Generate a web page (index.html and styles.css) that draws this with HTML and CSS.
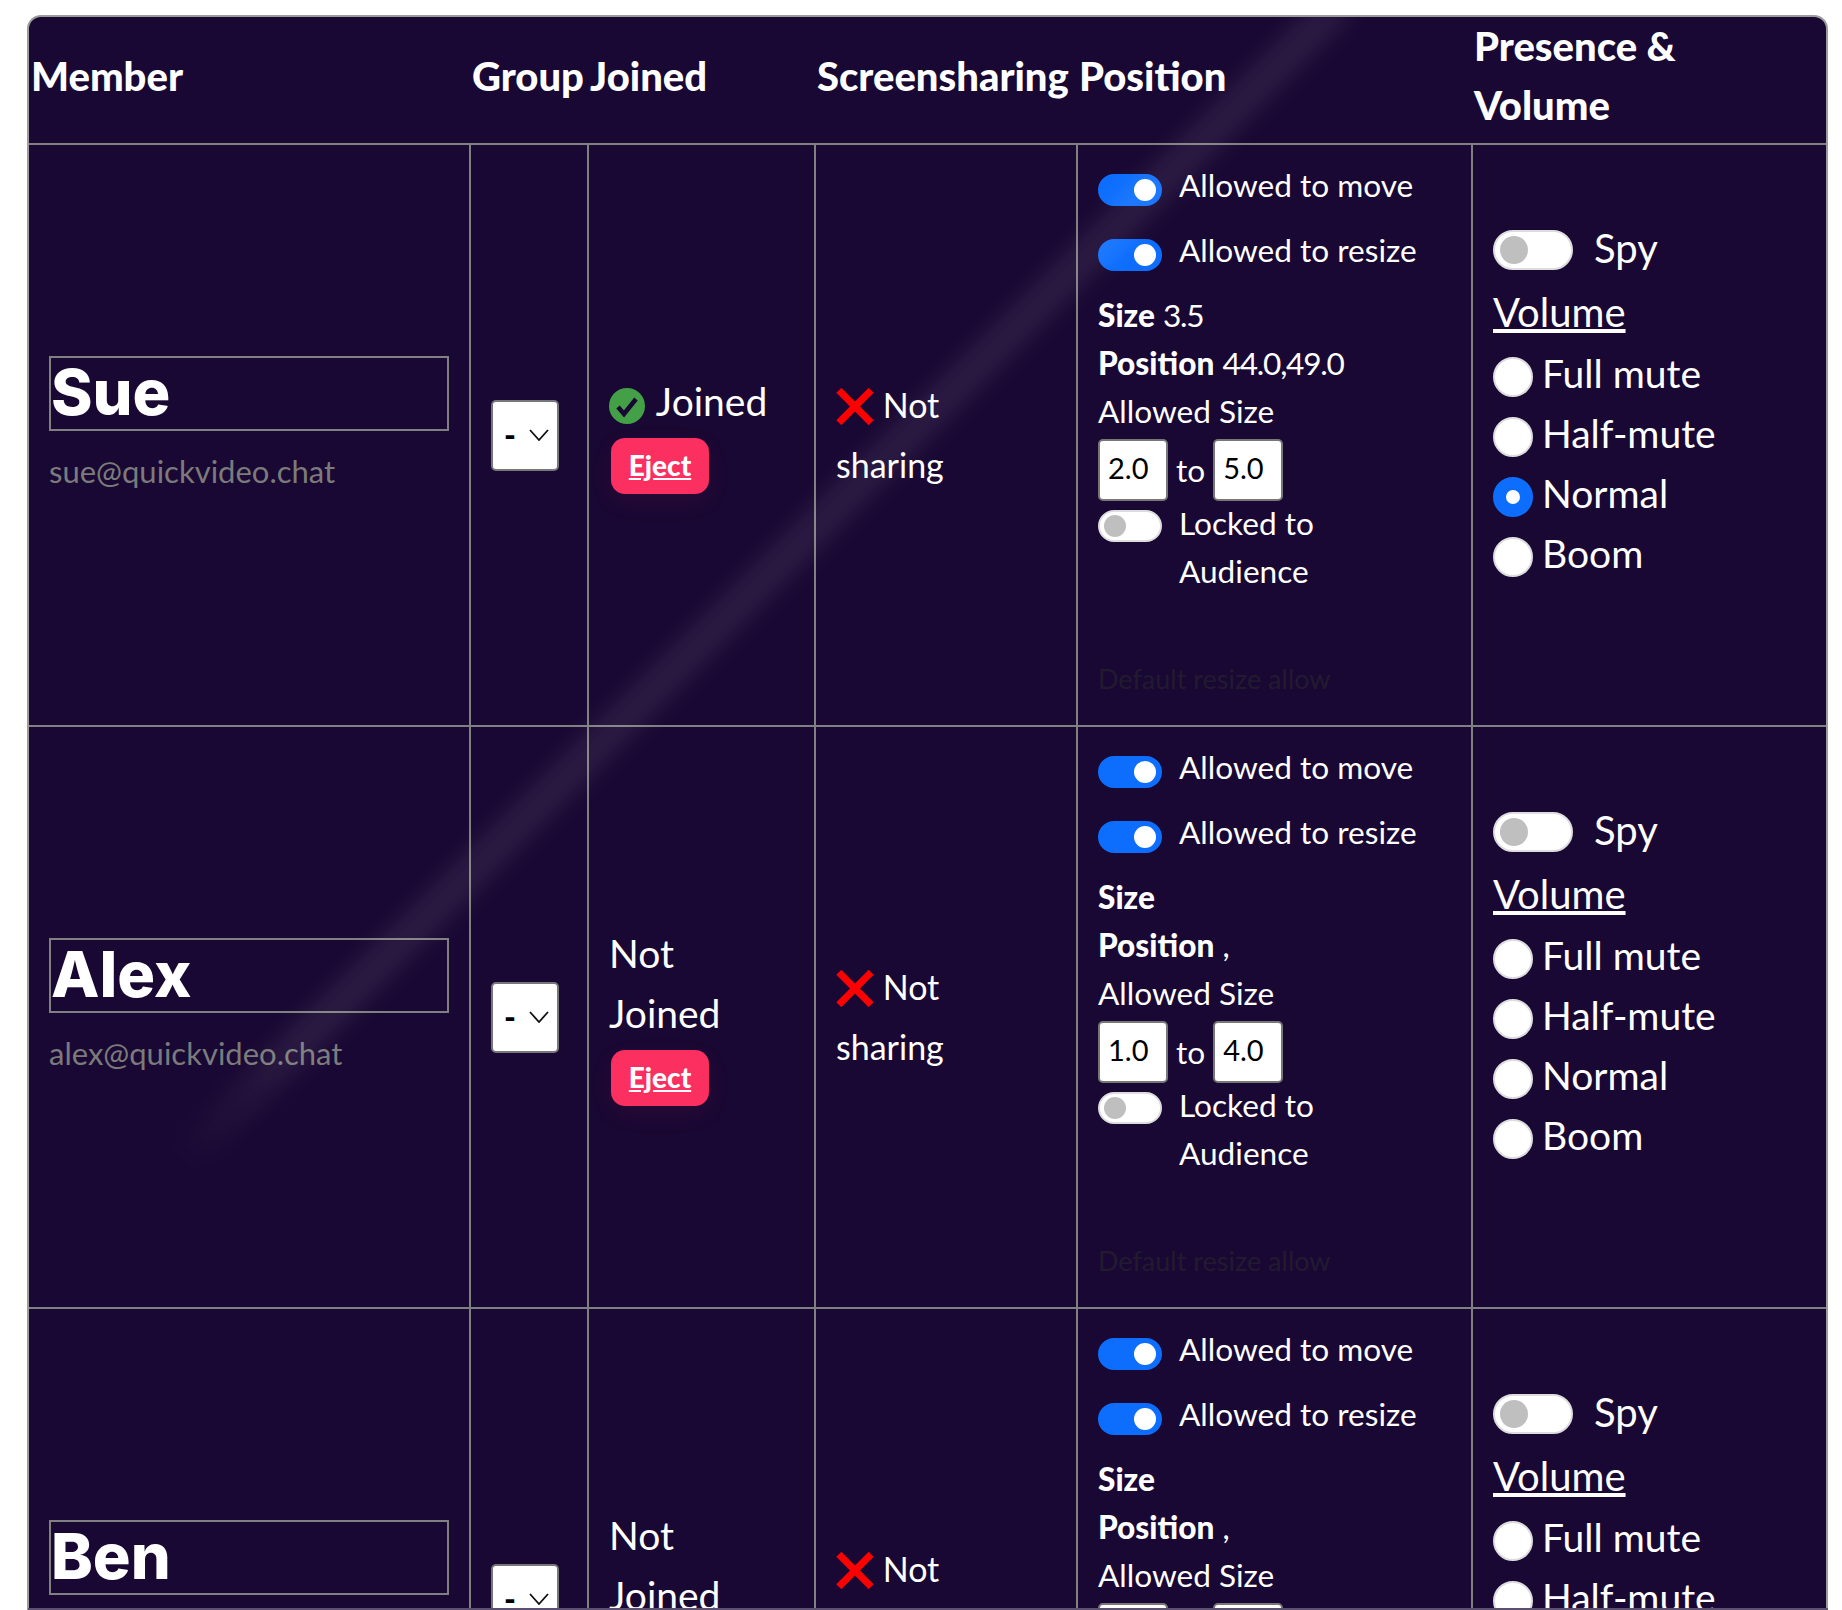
FILE: index.html
```html
<!DOCTYPE html>
<html lang="en">
<head>
<meta charset="utf-8">
<title>Members</title>
<link rel="stylesheet" href="styles.css">
</head>
<body>
<div class="frame">
  <table class="members">
    <colgroup>
      <col class="c-member"><col class="c-group"><col class="c-joined"><col class="c-share"><col class="c-pos"><col class="c-vol">
    </colgroup>
    <thead>
      <tr>
        <th>Member</th><th>Group</th><th>Joined</th><th>Screensharing</th><th>Position</th><th class="th-vol">Presence &amp; Volume</th>
      </tr>
    </thead>
    <tbody>
      <tr>
        <td class="member"><div class="name">Sue</div><div class="email">sue@quickvideo.chat</div></td>
        <td class="group"><div class="select"><span>-</span><svg viewBox="0 0 20 12" class="chev"><path d="M1 1l9 10 9-10"/></svg></div></td>
        <td class="joined">
          <div class="line"><svg class="ok" viewBox="0 0 36 36"><circle cx="18" cy="18" r="18"/><path d="M9 19l6 7 12-15"/></svg> Joined</div>
          <a class="eject">Eject</a>
        </td>
        <td class="share"><svg class="no" viewBox="0 0 40 38"><path d="M3 2l34 34M37 2L3 36"/></svg> Not sharing</td>
        <td class="pos">
          <div class="sw-row"><span class="sw on"></span><span>Allowed to move</span></div>
          <div class="sw-row"><span class="sw on"></span><span>Allowed to resize</span></div>
          <div class="stat"><b>Size</b> <span class="val">3.5</span></div>
          <div class="stat"><b>Position</b> <span class="val">44.0,49.0</span></div>
          <div class="stat">Allowed Size</div>
          <div class="range"><span class="num">2.0</span><span>to</span><span class="num">5.0</span></div>
          <div class="sw-row lock"><span class="sw"></span><span>Locked to Audience</span></div>
          <div class="ghost">Default resize allow</div>
        </td>
        <td class="vol">
          <div class="spy"><span class="sw big"></span><span>Spy</span></div>
          <div class="vol-title">Volume</div>
          <div class="radio"><span class="dot"></span>Full mute</div>
          <div class="radio"><span class="dot"></span>Half-mute</div>
          <div class="radio"><span class="dot on"></span>Normal</div>
          <div class="radio"><span class="dot"></span>Boom</div>
        </td>
      </tr>
      <tr>
        <td class="member"><div class="name">Alex</div><div class="email">alex@quickvideo.chat</div></td>
        <td class="group"><div class="select"><span>-</span><svg viewBox="0 0 20 12" class="chev"><path d="M1 1l9 10 9-10"/></svg></div></td>
        <td class="joined">
          <div class="line">Not Joined</div>
          <a class="eject">Eject</a>
        </td>
        <td class="share"><svg class="no" viewBox="0 0 40 38"><path d="M3 2l34 34M37 2L3 36"/></svg> Not sharing</td>
        <td class="pos">
          <div class="sw-row"><span class="sw on"></span><span>Allowed to move</span></div>
          <div class="sw-row"><span class="sw on"></span><span>Allowed to resize</span></div>
          <div class="stat"><b>Size</b></div>
          <div class="stat"><b>Position</b> ,</div>
          <div class="stat">Allowed Size</div>
          <div class="range"><span class="num">1.0</span><span>to</span><span class="num">4.0</span></div>
          <div class="sw-row lock"><span class="sw"></span><span>Locked to Audience</span></div>
          <div class="ghost">Default resize allow</div>
        </td>
        <td class="vol">
          <div class="spy"><span class="sw big"></span><span>Spy</span></div>
          <div class="vol-title">Volume</div>
          <div class="radio"><span class="dot"></span>Full mute</div>
          <div class="radio"><span class="dot"></span>Half-mute</div>
          <div class="radio"><span class="dot"></span>Normal</div>
          <div class="radio"><span class="dot"></span>Boom</div>
        </td>
      </tr>
      <tr>
        <td class="member"><div class="name">Ben</div><div class="email">ben@quickvideo.chat</div></td>
        <td class="group"><div class="select"><span>-</span><svg viewBox="0 0 20 12" class="chev"><path d="M1 1l9 10 9-10"/></svg></div></td>
        <td class="joined">
          <div class="line">Not Joined</div>
          <a class="eject">Eject</a>
        </td>
        <td class="share"><svg class="no" viewBox="0 0 40 38"><path d="M3 2l34 34M37 2L3 36"/></svg> Not sharing</td>
        <td class="pos">
          <div class="sw-row"><span class="sw on"></span><span>Allowed to move</span></div>
          <div class="sw-row"><span class="sw on"></span><span>Allowed to resize</span></div>
          <div class="stat"><b>Size</b></div>
          <div class="stat"><b>Position</b> ,</div>
          <div class="stat">Allowed Size</div>
          <div class="range"><span class="num">1.0</span><span>to</span><span class="num">4.0</span></div>
          <div class="sw-row lock"><span class="sw"></span><span>Locked to Audience</span></div>
          <div class="ghost">Default resize allow</div>
        </td>
        <td class="vol">
          <div class="spy"><span class="sw big"></span><span>Spy</span></div>
          <div class="vol-title">Volume</div>
          <div class="radio"><span class="dot"></span>Full mute</div>
          <div class="radio"><span class="dot"></span>Half-mute</div>
          <div class="radio"><span class="dot"></span>Normal</div>
          <div class="radio"><span class="dot"></span>Boom</div>
        </td>
      </tr>
    </tbody>
  </table>
  <div class="streak"></div>
</div>
<div class="edge"></div>
</body>
</html>
```
FILE: styles.css
```css
* { box-sizing: border-box; }
html, body { margin: 0; height: 1610px; overflow: hidden; background: #fff; }
body { padding: 15px 14px 0 27px; font-family: "Lato", "Noto Sans", sans-serif; color: #fff; }

.frame {
  position: relative;
  height: 1700px;
  background: #190833;
  border: 2px solid #9c9c9c;
  border-radius: 14px 14px 0 0;
  overflow: hidden;
}
.members { width: 100%; border-collapse: collapse; table-layout: fixed; font-size: 39px; line-height: 60px; }
.c-member { width: 441px; }
.c-group { width: 118px; }
.c-joined { width: 227px; }
.c-share { width: 262px; }
.c-pos { width: 395px; }

th { text-align: left; font-size: 40px; font-weight: 900; line-height: 59px; padding: 0 2px 8px; height: 126px; border-bottom: 2px solid #808080; }
.th-vol { padding-right: 60px; }
td { border: 2px solid #808080; height: 582px; vertical-align: middle; padding: 0; }
tr td:first-child { border-left: 0; }
tr td:last-child { border-right: 0; }

.member { padding: 0 20px 20px 20px; }
.name {
  height: 75px;
  border: 2px solid #808080;
  font-family: "Inter", sans-serif;
  font-weight: 800;
  font-size: 63px;
  line-height: 69px;
  padding-left: 0;
}
.email { color: #7b7b7b; font-size: 31px; line-height: 48px; margin-top: 16px; }

.group { padding-left: 20px; }
.select {
  width: 68px; height: 71px;
  background: #fff; color: #000;
  border: 2px solid #777; border-radius: 5px;
  display: flex; align-items: center; justify-content: space-between;
  padding: 0 8px 0 11px;
  font-size: 32px; font-weight: 900; line-height: 1;
}
.chev { width: 20px; height: 12px; fill: none; stroke: #111; stroke-width: 1.8; }

.joined { padding-left: 20px; padding-right: 40px; }
.ok { width: 36px; height: 36px; vertical-align: -8px; margin-right: 2px; }
.ok circle { fill: #43a047; }
.ok path { fill: none; stroke: #190833; stroke-width: 4.5; }
.eject {
  display: inline-block;
  width: 98px; height: 56px;
  margin: 6px 0 6px 2px;
  background: #fb2f60;
  border-radius: 14px;
  font-size: 28px; font-weight: 900; line-height: 54px;
  text-align: center; text-decoration: underline;
  box-shadow: 0 8px 24px rgba(251, 47, 96, .08);
}

.share { padding: 0 40px 0 20px; font-size: 34px; }
.no { width: 38px; height: 37px; vertical-align: -7px; margin-right: 0; fill: none; stroke: #f00; stroke-width: 7.5; }

.pos { vertical-align: top; padding: 16px 10px 0 20px; font-size: 31.6px; line-height: 48px; }
.sw-row { display: flex; gap: 17px; height: 65px; }
.sw {
  flex: none; position: relative; display: block;
  width: 64px; height: 32px; margin-top: 13px;
  border-radius: 16px;
  background: #fff;
  border: 2px solid #ddd;
}
.sw::after {
  content: ""; position: absolute; left: 4px; top: 3px;
  width: 22px; height: 22px; border-radius: 50%; background: #bfbfbf;
}
.sw.on { background: #0d6efd; border-color: #0d6efd; }
.sw.on::after { left: auto; right: 4px; background: #fff; }
.lock { height: auto; width: 250px; margin-top: -2px; }
.lock .sw { margin-top: 11px; }
.stat { height: 48px; }
.stat b { font-weight: 900; }
.val { letter-spacing: -1.2px; }
.range { display: flex; align-items: center; gap: 8px; height: 62px; margin-top: 4px; }
.num {
  width: 70px; height: 62px;
  background: #fff; color: #000;
  border: 2px solid #777; border-radius: 5px;
  padding-left: 8px; line-height: 54px; font-size: 29px;
}
.ghost { color: #221b30; margin-top: 60px; font-size: 27px; }

.vol { vertical-align: top; padding: 75px 10px 0 20px; }
.spy { display: flex; gap: 21px; height: 62px; align-items: flex-start; }
.spy span:last-child { line-height: 56px; font-size: 40px; }
.sw.big { width: 80px; height: 40px; margin-top: 10px; border-radius: 20px; }
.sw.big::after { left: 5px; top: 4px; width: 28px; height: 28px; }
.vol-title { text-decoration: underline; height: 61px; font-size: 40px; }
.radio { display: flex; gap: 9px; height: 60px; }
.dot {
  flex: none; width: 40px; height: 40px; margin-top: 14px;
  border-radius: 50%; background: #fff; border: 2px solid #ddd;
}
.dot.on { background: #fff; border: 13px solid #0d6efd; }

.streak {
  position: absolute; left: -87px; top: 546px;
  width: 1640px; height: 36px;
  transform: rotate(-45deg);
  background: linear-gradient(to right, transparent 0, rgba(255,255,255,.075) 10%, rgba(255,255,255,.075) 98%, rgba(255,255,255,.05) 100%);
  filter: blur(9px);
  pointer-events: none;
}
.edge { position: fixed; left: 28px; width: 1800px; bottom: 0; height: 2px; background: #5b5070; }
```
